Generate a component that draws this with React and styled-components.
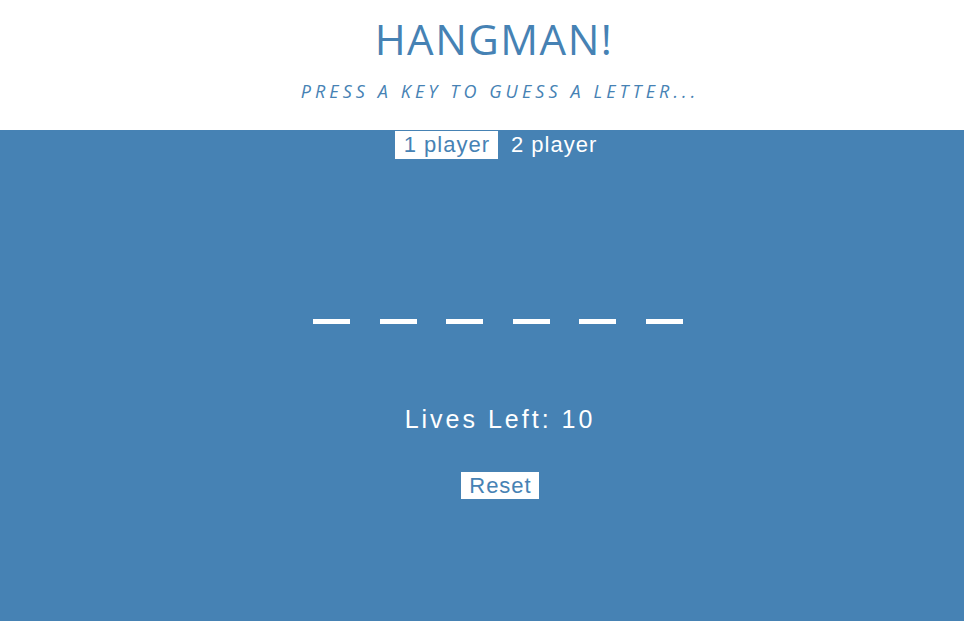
import React, { useState } from 'react'
import styled, { createGlobalStyle } from 'styled-components'

const STEEL = '#4682b4'

const GlobalStyle = createGlobalStyle`
  html, body {
    margin: 0;
    padding: 0;
    background: ${STEEL};
  }
  body {
    font-family: 'Liberation Sans', Arial, sans-serif;
  }
`

export default function App() {
  const [players, setPlayers] = useState(1)
  const word = ['', '', '', '', '', '']

  return (
    <>
      <GlobalStyle />
      <Page>
        <Header>
          <Title>HANGMAN!</Title>
          <Subtitle>Press a key to guess a letter...</Subtitle>
        </Header>
        <Game>
          <ModeToggle>
            <ModeButton active={players === 1} onClick={() => setPlayers(1)}>1 player</ModeButton>
            <ModeButton active={players === 2} onClick={() => setPlayers(2)}>2 player</ModeButton>
          </ModeToggle>
          <Word>
            {word.map((letter, i) => (
              <Blank key={i}>{letter}</Blank>
            ))}
          </Word>
          <Lives>Lives Left: 10</Lives>
          <ResetButton>Reset</ResetButton>
        </Game>
      </Page>
    </>
  )
}

const Page = styled.div`
  min-height: 100vh;
  display: flex;
  flex-direction: column;
`

const Header = styled.header`
  background: #fff;
  height: 130px;
  box-sizing: border-box;
  padding: 10px 0 0 36px;
  display: flex;
  flex-direction: column;
  align-items: center;
`

const Title = styled.h1`
  margin: 0 12px 0 0;
  font-family: 'Open Sans', sans-serif;
  font-weight: 400;
  font-size: 42px;
  letter-spacing: 1.5px;
  color: ${STEEL};
`

const Subtitle = styled.h2`
  margin: 12px 0 0;
  font-family: 'Open Sans', sans-serif;
  font-weight: 400;
  font-style: italic;
  font-size: 18px;
  text-transform: uppercase;
  letter-spacing: 4.1px;
  color: ${STEEL};
`

const Game = styled.main`
  flex: 1;
  background: ${STEEL};
  padding-left: 36px;
  display: flex;
  flex-direction: column;
  align-items: center;
`

const ModeToggle = styled.div`
  margin-top: 1px;
  display: flex;
  gap: 4px;
`

const ModeButton = styled.button`
  border: none;
  margin: 0;
  padding: 0 8px 0 9px;
  height: 28px;
  line-height: 28px;
  font-family: 'Liberation Sans', Arial, sans-serif;
  font-size: 22px;
  letter-spacing: 1px;
  cursor: pointer;
  background: ${(p) => (p.active ? '#fff' : STEEL)};
  color: ${(p) => (p.active ? STEEL : '#fff')};
`

const Word = styled.div`
  margin: 160px 4px 0 0;
  display: flex;
  gap: 29.6px;
`

const Blank = styled.span`
  display: block;
  width: 37px;
  height: 5px;
  background: #fff;
`

const Lives = styled.div`
  margin-top: 81px;
  font-family: 'Liberation Sans', Arial, sans-serif;
  font-size: 25px;
  line-height: 29px;
  letter-spacing: 3px;
  color: #fff;
`

const ResetButton = styled.button`
  margin-top: 38px;
  border: none;
  padding: 0 7px 0 8px;
  height: 27px;
  line-height: 27px;
  background: #fff;
  color: ${STEEL};
  font-family: 'Liberation Sans', Arial, sans-serif;
  font-size: 22px;
  letter-spacing: 1px;
  cursor: pointer;
`
